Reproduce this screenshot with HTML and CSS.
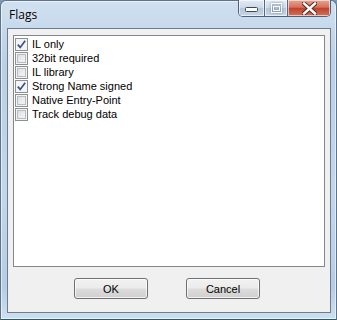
FILE: index.html
```html
<!DOCTYPE html>
<html lang="en">
<head>
<meta charset="utf-8"/>
<meta content="width=device-width, initial-scale=1.0" name="viewport"/>
<title>Flags</title>
<link rel="stylesheet" href="styles.css">
</head>
<body>
<div class="window">
  <div class="titlebar">
    <span class="title">Flags</span>
    <div class="caption-buttons">
      <button class="cap cap-min" aria-label="Minimize">
        <svg width="13" height="6" viewBox="0 0 13 6"><rect x="0.5" y="0.5" width="12" height="4" rx="1" fill="#fff" stroke="#3c4a5c"/></svg>
      </button>
      <button class="cap cap-max" aria-label="Maximize">
        <svg width="11" height="10" viewBox="0 0 11 10"><rect x="0.5" y="0.5" width="10" height="9" fill="none" stroke="#fff"/><rect x="2.5" y="3.5" width="6" height="4" fill="none" stroke="#fff"/></svg>
      </button>
      <button class="cap cap-close" aria-label="Close">
        <svg width="15" height="13" viewBox="0 0 15 13"><path d="M2 1.5 L13 11.5 M13 1.5 L2 11.5" stroke="#5a2a22" stroke-width="4.4" stroke-linecap="square"/><path d="M2 1.5 L13 11.5 M13 1.5 L2 11.5" stroke="#fff" stroke-width="2.4" stroke-linecap="square"/></svg>
      </button>
    </div>
  </div>
  <div class="client">
    <ul class="flag-list">
      <li><span class="check checked"><svg width="9" height="9" viewBox="0 0 9 9"><path d="M0.8 4.6 L3.2 7.4 L8.2 0.8" stroke="#3b4f8c" stroke-width="1.7" fill="none"/></svg></span>IL only</li>
      <li><span class="check"></span>32bit required</li>
      <li><span class="check"></span>IL library</li>
      <li><span class="check checked"><svg width="9" height="9" viewBox="0 0 9 9"><path d="M0.8 4.6 L3.2 7.4 L8.2 0.8" stroke="#3b4f8c" stroke-width="1.7" fill="none"/></svg></span>Strong Name signed</li>
      <li><span class="check"></span>Native Entry-Point</li>
      <li><span class="check"></span>Track debug data</li>
    </ul>
    <div class="button-row">
      <button class="btn">OK</button>
      <button class="btn">Cancel</button>
    </div>
  </div>
</div>
</body>
</html>
```
FILE: styles.css
```css
* {
  box-sizing: border-box;
}

body {
  margin: 0;
  padding: 0;
  background: #7a9bb8;
  font-family: 'Liberation Sans', Arial, sans-serif;
}

.window {
  width: 337px;
  height: 320px;
  border: 1px solid #5f7488;
  border-bottom-color: #2f5a6a;
  border-radius: 6px 6px 0 0;
  background: linear-gradient(180deg, #d0e0f0 0%, #b9d0e7 20%, #c2d7ec 60%, #b5cde5 90%, #cde0f0 100%);
  box-shadow: inset 0 0 0 1px rgba(255, 255, 255, 0.55);
  display: flex;
  flex-direction: column;
}

.titlebar {
  height: 27px;
  display: flex;
  justify-content: space-between;
  align-items: flex-start;
}

.title {
  font-family: 'Open Sans', 'Noto Sans', sans-serif;
  font-size: 12px;
  color: #000;
  margin: 5px 0 0 8px;
  text-shadow: 0 0 6px rgba(255, 255, 255, 0.9);
}

.caption-buttons {
  display: flex;
  margin: -1px 5px 0 0;
  height: 17px;
  border: 1px solid #4f6178;
  border-top: none;
  border-radius: 0 0 5px 5px;
  overflow: hidden;
}

.cap {
  height: 16px;
  border: none;
  padding: 0;
  margin: 0;
  display: flex;
  align-items: center;
  justify-content: center;
  box-shadow: inset 0 0 0 1px rgba(255, 255, 255, 0.6);
}

.cap-min {
  width: 26px;
  background: linear-gradient(180deg, #e3ebf5 0%, #cdd9e8 48%, #b5c6db 52%, #c8d6e7 100%);
  border-right: 1px solid #55687e;
  align-items: flex-end;
  padding-bottom: 3px;
}

.cap-max {
  width: 23px;
  background: linear-gradient(180deg, #e3ebf5 0%, #cdd9e8 48%, #b5c6db 52%, #c8d6e7 100%);
  border-right: 1px solid #55687e;
}

.cap-max svg {
  opacity: 0.9;
  filter: drop-shadow(0 0 1px #5a6b80);
}

.cap-close {
  width: 42px;
  background: linear-gradient(180deg, #e7a593 0%, #d5715c 45%, #c0432c 52%, #d0735a 100%);
}

.client {
  flex: 1;
  margin: 0 5px 6px 6px;
  border: 1px solid #6e7c8b;
  background: #f0f0f0;
  padding: 6px 5px 0 5px;
  display: flex;
  flex-direction: column;
}

.flag-list {
  list-style-type: none;
  margin: 0;
  padding: 1px 1px;
  height: 232px;
  background: #fff;
  border: 1px solid #828790;
}

.flag-list li {
  height: 14px;
  display: flex;
  align-items: center;
  font-size: 11px;
  color: #000;
  white-space: nowrap;
}

.check {
  width: 13px;
  height: 13px;
  margin-right: 4px;
  border: 1px solid #8e8f8f;
  background: linear-gradient(135deg, #d5d8dc 0%, #eceef0 60%, #f8f8f8 100%);
  box-shadow: inset 0 0 0 1px #f4f4f4, inset 0 0 0 2px #b9bdc2;
  display: flex;
  align-items: center;
  justify-content: center;
}

.check.checked {
  background: #f4f4f4;
  box-shadow: none;
}

.button-row {
  display: flex;
  gap: 38px;
  margin-top: 11px;
  padding-left: 61px;
}

.btn {
  width: 74px;
  height: 21px;
  font-family: 'Liberation Sans', Arial, sans-serif;
  font-size: 11px;
  color: #000;
  border: 1px solid #707070;
  border-radius: 3px;
  background: linear-gradient(180deg, #f2f2f2 0%, #ebebeb 48%, #dddddd 52%, #cfcfcf 100%);
  box-shadow: inset 0 0 0 1px rgba(255, 255, 255, 0.7);
  padding: 0;
}
```
